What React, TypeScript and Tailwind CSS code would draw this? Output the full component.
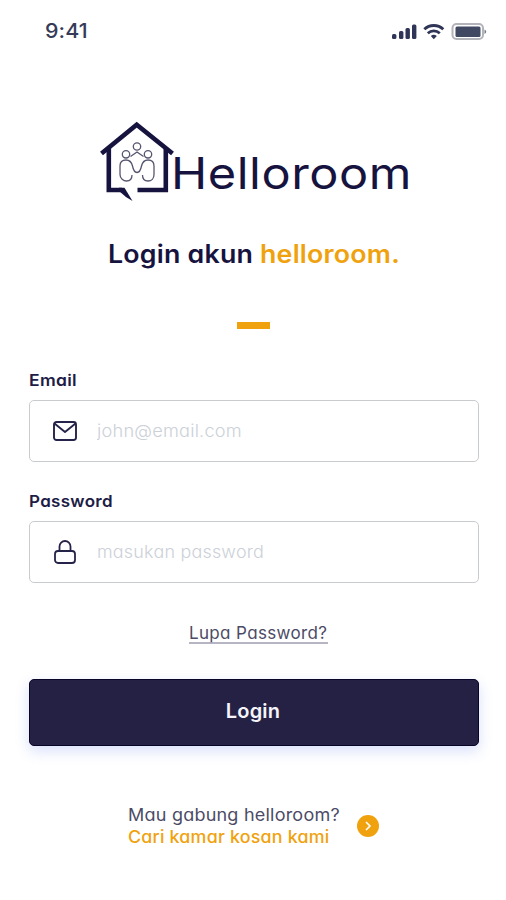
import type { ReactNode } from "react";

type FieldProps = {
  id: string;
  label: string;
  type: string;
  placeholder: string;
  placeholderClass: string;
  labelClass: string;
  icon: ReactNode;
};

function StatusBar() {
  return (
    <header className="flex h-[62px] items-center justify-between pr-[19px] pl-[45px] text-[#363a59]">
      <span className="origin-left scale-x-[1.07] text-[20px] leading-none font-medium tracking-[0.1px]">9:41</span>
      <svg width="96" height="20" viewBox="0 0 96 20" fill="none">
        <g fill="#2f3557">
          <rect x="1" y="13" width="4.4" height="5" rx="1.5" />
          <rect x="8" y="10" width="4.4" height="8" rx="1.5" />
          <rect x="14.5" y="7" width="4.4" height="11" rx="1.5" />
          <rect x="21" y="3.5" width="4.4" height="14.5" rx="1.5" />
          <path d="M39.8 15a4.5 4.5 0 0 1 6 0l-3 3.2Z" />
        </g>
        <g stroke="#2f3557" strokeWidth="2.8">
          <path d="M33.3 8.2a14 14 0 0 1 19 0" />
          <path d="M36.8 12.2a9 9 0 0 1 12 0" />
        </g>
        <rect x="61.5" y="3" width="30.5" height="15" rx="4" stroke="#b3b3ba" strokeWidth="2" />
        <rect x="64.5" y="5.5" width="25" height="10.5" rx="1.5" fill="#414862" />
        <path d="M93.5 8.5q3.5 2 0 4.5Z" fill="#777b8c" />
      </svg>
    </header>
  );
}

function Logo() {
  return (
    <div className="flex h-[84px] pl-[100px] text-[#17133f]">
      <svg className="shrink-0" width="74" height="84" viewBox="0 0 74 84" fill="none">
        <g stroke="currentColor" strokeWidth="4.6">
          <path d="M1.5 33.5 36.7 4.8 72.5 33.5" />
          <path d="M8.8 28v42H22" />
          <path d="M65.8 28v42H37.5" />
        </g>
        <path d="M19 67.7h5.5L32.5 81Q25 77 19 71Z" fill="currentColor" />
        <g stroke="#55556e" strokeWidth="1.3">
          <circle cx="37" cy="26.5" r="3.7" />
          <circle cx="26" cy="34.3" r="3.7" />
          <circle cx="48" cy="34.3" r="3.7" />
          <path d="m30.5 36.5 6.5-4.5 6.5 4.5" />
          <path d="M32 55c0 4-2.5 6-5.5 6S20 58.5 20 54.5V46c0-4 2.5-6 6-6s5.5 2 6.5 6c.8 4 2 6.5 4.5 6.5s3.7-2.5 4.5-6.5c1-4 3-6 6.5-6s6 2 6 6v8.5c0 4-2.5 6.5-6 6.5s-5.5-2-5.5-6" />
        </g>
      </svg>
      <span className="mt-[29px] -ml-[3.5px] origin-left scale-x-[1.12] text-[43.5px] leading-[48px] font-normal tracking-[0.5px]">
        Helloroom
      </span>
    </div>
  );
}

function MailIcon() {
  return (
    <svg width="24" height="20" viewBox="0 0 24 20" fill="none" stroke="#26234a" strokeWidth="1.9" strokeLinejoin="round">
      <rect x="1" y="1" width="22" height="18" rx="2.5" />
      <path d="m1.5 2.5 10.5 8.5L22.5 2.5" />
    </svg>
  );
}

function LockIcon() {
  return (
    <svg width="24" height="24" viewBox="0 0 24 24" fill="none" stroke="#26234a" strokeWidth="1.8">
      <rect x="2" y="11" width="20" height="12" rx="3" />
      <path d="M6.5 11V6.5a5.5 5.5 0 0 1 11 0V11" />
    </svg>
  );
}

function Field({ id, label, type, placeholder, placeholderClass, labelClass, icon }: FieldProps) {
  return (
    <div>
      <label htmlFor={id} className={`block origin-left text-[16.5px] leading-5 font-semibold text-[#201c45] ${labelClass}`}>
        {label}
      </label>
      <div className="mt-[10px] flex h-[62px] items-center rounded-[5px] border-[1.5px] border-[#c9cccf] pl-[23px]">
        <span className="flex w-6 justify-center">{icon}</span>
        <input
          id={id}
          type={type}
          placeholder={placeholder}
          className={`mt-px ml-[20px] w-[300px] origin-left bg-transparent text-[17px] font-light outline-none placeholder:text-[#ccd1d8] ${placeholderClass}`}
        />
      </div>
    </div>
  );
}

export default function App() {
  return (
    <main className="h-[900px] w-[506px] overflow-hidden bg-white font-['Inter','Noto_Sans',sans-serif] [font-feature-settings:'cv11']">
      <StatusBar />
      <div className="mt-[58px]">
        <Logo />
      </div>
      <h1 className="mt-[34px] ml-[108px] w-[300px] origin-left scale-x-[1.07] text-[25px] leading-8 font-semibold tracking-[0.2px] whitespace-nowrap text-[#17133f]">
        Login akun <span className="text-[#f0a20e]">helloroom.</span>
      </h1>
      <div className="mt-[52px] ml-[237px] h-[7px] w-[33px] bg-[#f0a20e]" />

      <form className="mt-[41px] mr-[27px] ml-[29px]">
        <Field
          id="email"
          label="Email"
          type="email"
          placeholder="john@email.com"
          placeholderClass="scale-x-[1.07] tracking-[0.2px]"
          labelClass="scale-x-[1.06] tracking-[0.3px]"
          icon={<MailIcon />}
        />
        <div className="mt-[29px]">
          <Field
            id="password"
            label="Password"
            type="password"
            placeholder="masukan password"
            placeholderClass="scale-x-[1.055] tracking-[0.2px]"
            labelClass="scale-x-[1.03] tracking-[0.3px]"
            icon={<LockIcon />}
          />
        </div>
        <a
          href="#lupa"
          className="mt-[40px] ml-[160px] block h-[21px] w-[139px] border-b-2 border-[#b5b5c3] text-[17px] leading-[21px] tracking-[0.35px] whitespace-nowrap text-[#4b4b66]"
        >
          Lupa Password?
        </a>
        <button
          type="button"
          className="mt-[35px] flex h-[67px] w-full items-center justify-center rounded-[5px] border-[1.5px] border-[#080528] bg-[#242144] pr-[2px] pb-[3px] text-[20px] font-semibold tracking-[0.2px] text-[#f4f4fa] shadow-[0_5px_14px_rgba(80,110,230,0.22)]"
        >
          Login
        </button>
      </form>

      <footer className="mt-[58px] flex items-center pl-[128px] text-[17px] leading-[22px]">
        <div className="w-[229px] whitespace-nowrap">
          <p className="origin-left scale-x-[1.06] tracking-[0.2px] text-[#4b4b66]">Mau gabung helloroom?</p>
          <p className="origin-left scale-x-[1.05] font-medium tracking-[0.2px] text-[#f0a20e]">Cari kamar kosan kami</p>
        </div>
        <span className="flex size-[22px] items-center justify-center rounded-full bg-[#f0a20e]">
          <svg width="8" height="10" viewBox="0 0 8 10" fill="none" stroke="#fff" strokeWidth="1.6">
            <path d="m2 1 4 4-4 4" />
          </svg>
        </span>
      </footer>
    </main>
  );
}
